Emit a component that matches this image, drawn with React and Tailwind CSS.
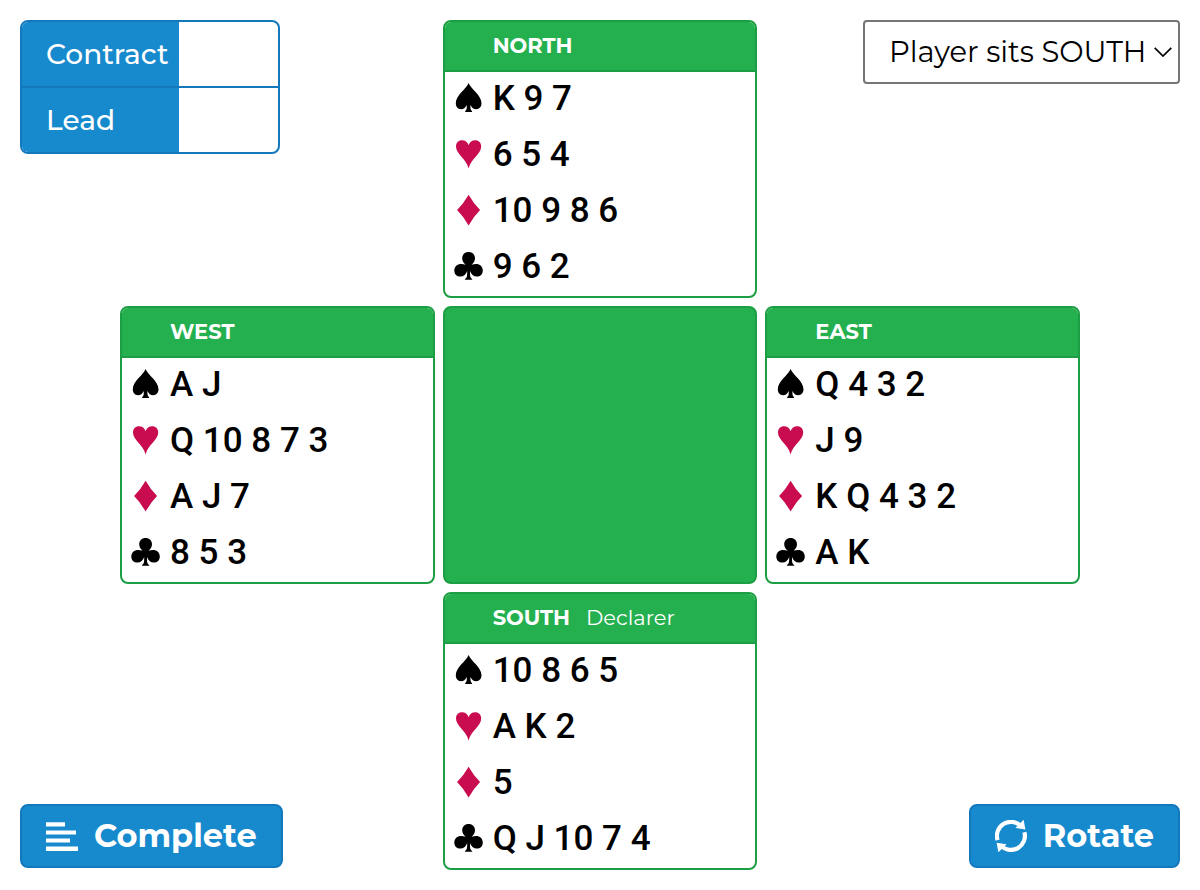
import { useState } from "react";

const HANDS = {
  NORTH: ["K 9 7", "6 5 4", "10 9 8 6", "9 6 2"],
  WEST: ["A J", "Q 10 8 7 3", "A J 7", "8 5 3"],
  EAST: ["Q 4 3 2", "J 9", "K Q 4 3 2", "A K"],
  SOUTH: ["10 8 6 5", "A K 2", "5", "Q J 10 7 4"],
};

const SUITS = [
  {
    name: "Spades",
    color: "text-black",
    path: "M15.6 1C17.8 7.2 28.5 13 28.5 21.3C28.5 25 26.2 27.2 23.2 27.2C20.6 27.2 18.8 25.8 17.4 23C17.4 26.8 17.6 28.4 19 29V30H12.2V29C13.6 28.4 13.8 26.8 13.8 23C12.4 25.8 10.6 27.2 8 27.2C5 27.2 2.8 25 2.8 21.3C2.8 13 13.4 7.2 15.6 1Z",
  },
  {
    name: "Hearts",
    color: "text-[#c90c4f]",
    path: "M15.6 30.6C13.4 20.5 3 16.5 3 8.6C3 4.6 5.4 2.3 9 2.3C12.2 2.3 14.5 4 15.6 7.2C16.7 4 19 2.3 22.2 2.3C25.8 2.3 28.2 4.6 28.2 8.6C28.2 16.5 17.8 20.5 15.6 30.6Z",
  },
  {
    name: "Diamonds",
    color: "text-[#c90c4f]",
    path: "M15.6 0.8Q20.5 9.5 27.1 16.1Q20.5 22.7 15.6 31.6Q10.7 22.7 4.1 16.1Q10.7 9.5 15.6 0.8Z",
  },
  {
    name: "Clubs",
    color: "text-black",
    path: "M15.6 2C19.4 2 22 4.6 22 8.2C22 10.8 20.8 12.6 18.6 14.8C20 14.2 21.4 13.9 23 13.9C27 13.9 29.8 16.6 29.8 20.4C29.8 24.2 27.2 26.6 23.8 26.6C20.4 26.6 18.2 24.4 17 21C17 25.8 17.2 28.2 19.2 28.9V29.8H12V28.9C14 28.2 14.2 25.8 14.2 21C13 24.4 10.8 26.6 7.4 26.6C4 26.6 1.3 24.2 1.3 20.4C1.3 16.6 4.2 13.9 8.2 13.9C9.8 13.9 11.2 14.2 12.6 14.8C10.4 12.6 9.2 10.8 9.2 8.2C9.2 4.6 11.8 2 15.6 2Z",
  },
];

function Hand({ seat, role, className }) {
  return (
    <section
      className={`overflow-hidden rounded-lg border-2 border-[#1c9e44] bg-white ${className}`}
    >
      <header className="flex h-[50px] items-center gap-4 border-b-2 border-[#1c9e44] bg-[#24b04f] pl-12 text-[21px] text-white">
        <h2 className="font-bold">{seat}</h2>
        {role && <span>{role}</span>}
      </header>
      <ul>
        {SUITS.map((suit, i) => (
          <li key={suit.name} className="flex h-14 items-center gap-2 pb-0.5 pl-2">
            <svg
              viewBox="0 1 32 32"
              role="img"
              aria-label={suit.name}
              className={`size-8 shrink-0 overflow-visible ${suit.color}`}
            >
              <path d={suit.path} fill="currentColor" />
            </svg>
            <span className="font-[Roboto,sans-serif] text-[35px] leading-10 font-medium text-black">
              {HANDS[seat][i]}
            </span>
          </li>
        ))}
      </ul>
    </section>
  );
}

const BUTTON =
  "z-10 mb-0.5 flex h-16 items-center gap-4 self-end rounded-lg border-2 border-[#1478bd] bg-[#178ace] px-6 text-[32px] font-bold text-white [grid-area:1/1]";

export default function App() {
  const [player, setPlayer] = useState("SOUTH");
  return (
    <main className="grid min-h-screen bg-white p-5 font-[Montserrat,Inter,sans-serif]">
      <div className="mx-auto grid w-full max-w-[960px] grid-cols-3 content-start gap-2 [grid-area:1/1]">
        <Hand seat="NORTH" className="col-start-2" />
        <Hand seat="WEST" className="col-start-1" />
        <div className="rounded-lg border-2 border-[#1c9e44] bg-[#24b04f]" />
        <Hand seat="EAST" className="col-start-3" />
        <Hand seat="SOUTH" role="Declarer" className="col-start-2" />
      </div>

      <div className="z-10 self-start justify-self-start overflow-hidden rounded-lg border-2 border-[#1478bd] bg-white [grid-area:1/1]">
        <table className="border-separate border-spacing-0 text-left text-[28px]">
          <tbody>
            <tr>
              <th
                scope="row"
                className="h-[66px] w-[157px] border-b-2 border-[#1478bd] bg-[#178ace] py-0 pr-2 pl-6 font-medium text-white"
              >
                Contract
              </th>
              <td className="w-[99px] border-b-2 border-[#1478bd]" />
            </tr>
            <tr>
              <th
                scope="row"
                className="h-16 bg-[#178ace] py-0 pr-2 pl-6 font-medium text-white"
              >
                Lead
              </th>
              <td />
            </tr>
          </tbody>
        </table>
      </div>

      <div className="relative z-10 self-start justify-self-end [grid-area:1/1]">
        <select
          aria-label="Player seat"
          value={player}
          onChange={(e) => setPlayer(e.target.value)}
          className="h-16 w-[317px] appearance-none rounded border-2 border-[#767676] bg-white pl-6 text-[29px] text-black"
        >
          {["NORTH", "EAST", "SOUTH", "WEST"].map((seat) => (
            <option key={seat} value={seat}>
              Player sits {seat}
            </option>
          ))}
        </select>
        <svg
          viewBox="0 0 18 10"
          aria-hidden="true"
          className="pointer-events-none absolute top-[27px] right-2 h-[10px] w-[18px]"
        >
          <path d="M0.7 0.8L9 9L17.3 0.8" fill="none" stroke="black" strokeWidth="1.7" />
        </svg>
      </div>

      <button type="button" className={`justify-self-start ${BUTTON}`}>
        <svg viewBox="0 0 32 32" aria-hidden="true" className="size-8" fill="currentColor">
          <path d="M0 2.2H19V6.6H0ZM0 10.4H30V14.6H0ZM0 18.4H24V22.6H0ZM0 26.6H32V31H0Z" />
        </svg>
        Complete
      </button>

      <button type="button" className={`justify-self-end ${BUTTON}`}>
        <svg viewBox="0 0 32 32" aria-hidden="true" className="size-8">
          <path
            d="M2.6 20.2A14 14 0 0 1 25.5 5.7M29.4 12.2A14 14 0 0 1 6.5 26.3"
            fill="none"
            stroke="currentColor"
            strokeWidth="4.2"
          />
          <path d="M28.6 -0.3L30.4 9.4L20.4 8ZM3.4 32.3L1.6 22.8L11.6 24.2Z" fill="currentColor" />
        </svg>
        Rotate
      </button>
    </main>
  );
}
